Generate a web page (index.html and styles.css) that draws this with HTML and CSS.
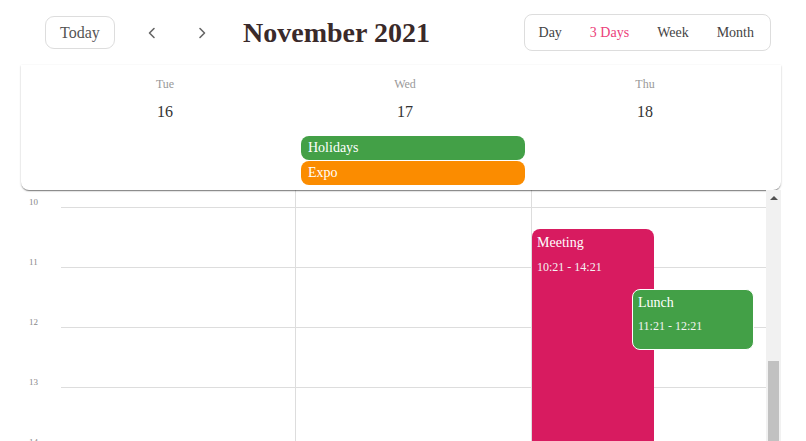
FILE: index.html
```html
<!DOCTYPE html>
<html>
<head>
<meta charset="utf-8">
<link rel="stylesheet" href="styles.css">
</head>
<body>
<div class="app">
  <header class="toolbar">
    <button class="today">Today</button>
    <button class="nav" aria-label="Previous">
      <svg width="16" height="16" viewBox="0 0 16 16"><polyline points="10,3.5 5.5,8 10,12.5" fill="none" stroke="#666" stroke-width="1.6" stroke-linecap="round" stroke-linejoin="round"/></svg>
    </button>
    <button class="nav" aria-label="Next">
      <svg width="16" height="16" viewBox="0 0 16 16"><polyline points="6,3.5 10.5,8 6,12.5" fill="none" stroke="#666" stroke-width="1.6" stroke-linecap="round" stroke-linejoin="round"/></svg>
    </button>
    <h1 class="title">November 2021</h1>
    <div class="views">
      <span class="view">Day</span>
      <span class="view active">3 Days</span>
      <span class="view">Week</span>
      <span class="view">Month</span>
    </div>
  </header>

  <section class="day-card">
    <div class="day-head">
      <div class="day"><div class="dow">Tue</div><div class="num">16</div></div>
      <div class="day"><div class="dow">Wed</div><div class="num">17</div></div>
      <div class="day"><div class="dow">Thu</div><div class="num">18</div></div>
      <div class="allday">
        <div class="bar green">Holidays</div>
        <div class="bar orange">Expo</div>
      </div>
    </div>
  </section>

  <section class="body">
    <div class="gutter">
      <div class="hour first"><span>10</span></div>
      <div class="hour"><span>11</span></div>
      <div class="hour"><span>12</span></div>
      <div class="hour"><span>13</span></div>
      <div class="hour"><span>14</span></div>
    </div>
    <div class="cols">
      <div class="col c1">
        <div class="slot first"></div><div class="slot"></div><div class="slot"></div><div class="slot"></div><div class="slot"></div>
      </div>
      <div class="col c2">
        <div class="slot first"></div><div class="slot"></div><div class="slot"></div><div class="slot"></div><div class="slot"></div>
      </div>
      <div class="col c3">
        <div class="slot first"></div><div class="slot"></div><div class="slot"></div><div class="slot"></div><div class="slot"></div>
        <div class="event meeting">
          <div class="ev-title">Meeting</div>
          <div class="ev-time">10:21 - 14:21</div>
        </div>
        <div class="event lunch">
          <div class="ev-title">Lunch</div>
          <div class="ev-time">11:21 - 12:21</div>
        </div>
      </div>
    </div>
    <div class="scrollbar">
      <div class="arrow"></div>
      <div class="thumb"></div>
    </div>
  </section>
</div>
</body>
</html>
```

FILE: styles.css
```css
* { box-sizing: border-box; }
html, body { margin: 0; padding: 0; background: #fff; }
body {
  font-family: "Liberation Serif", "Times New Roman", serif;
  width: 806px;
  height: 441px;
  overflow: hidden;
}

.toolbar {
  height: 65px;
  display: flex;
  align-items: center;
  padding-left: 45px;
}
.today {
  font-family: inherit;
  font-size: 16px;
  color: #555;
  background: #fff;
  border: 1px solid #ddd;
  border-radius: 9px;
  width: 70px;
  height: 33px;
  padding: 0;
  margin-right: 12px;
}
.nav {
  width: 50px;
  height: 33px;
  border: 0;
  background: transparent;
  padding: 0;
  display: flex;
  align-items: center;
  justify-content: center;
}
.title {
  margin: 0 0 0 16px;
  font-size: 28px;
  font-weight: bold;
  color: #3a2a2a;
  flex: 1;
  line-height: 1;
}
.views {
  display: flex;
  align-items: center;
  height: 37px;
  border: 1px solid #ddd;
  border-radius: 8px;
  margin-right: 35px;
  padding: 0 2px 0 0;
}
.view {
  padding: 0 14px;
  font-size: 14px;
  color: #444;
}
.view.active { color: #ec407a; }

.day-card {
  margin: 0 25px 0 21px;
  height: 125px;
  background: #fff;
  border-radius: 0 0 8px 8px;
  box-shadow: 0 2px 1px -1px rgba(0, 0, 0, 0.35), 0 1px 2px 0 rgba(0, 0, 0, 0.25), 0 0 1px 0 rgba(0, 0, 0, 0.08);
  position: relative;
  z-index: 2;
  padding: 11px 0 0 24px;
}
.day-head {
  display: grid;
  grid-template-columns: 240px 240px 240px;
}
.day { text-align: center; }
.dow {
  font-size: 12px;
  line-height: 16px;
  color: #999;
}
.num {
  margin-top: 12px;
  font-size: 16px;
  line-height: 16px;
  color: #333;
}
.allday {
  grid-column: 2;
  margin: 16px 0 0 16px;
  display: flex;
  flex-direction: column;
  gap: 1px;
}
.bar {
  height: 24px;
  border-radius: 8px;
  color: #fff;
  font-size: 14px;
  line-height: 24px;
  padding-left: 7px;
}
.green { background: #43a047; }
.orange { background: #fb8c00; }

.body {
  display: flex;
  height: 251px;
  overflow: hidden;
}
.gutter {
  width: 61px;
  flex: none;
}
.hour {
  height: 60px;
  display: flex;
  align-items: flex-end;
  padding-left: 29px;
}
.hour.first { height: 17px; }
.hour span {
  font-size: 9px;
  line-height: 10px;
  color: #888;
}
.cols {
  display: grid;
  grid-template-columns: 234px 236px 235px;
  flex: none;
}
.col {
  position: relative;
  display: flex;
  flex-direction: column;
}
.c2, .c3 { border-left: 1px solid #ddd; }
.slot {
  height: 60px;
  border-top: 1px solid #ddd;
  flex: none;
}
.slot.first { height: 17px; border-top: 0; }

.event {
  position: absolute;
  color: #fff;
  border-radius: 8px;
}
.meeting {
  top: 39px;
  left: 0;
  width: 122px;
  height: 240px;
  background: #d81b60;
  padding: 6px 5px;
}
.lunch {
  top: 99px;
  left: 100px;
  width: 122px;
  height: 61px;
  background: #43a047;
  border: 1px solid #fff;
  padding: 5px 5px;
}
.ev-title {
  font-size: 14px;
  line-height: 16px;
}
.ev-time {
  font-size: 12px;
  line-height: 16px;
  margin-top: 8px;
  color: #f4f4f4;
}
.lunch .ev-time { margin-top: 7px; }

.scrollbar {
  width: 15px;
  flex: none;
  background: #f1f1f1;
  position: relative;
  z-index: 3;
  display: flex;
  flex-direction: column;
  align-items: center;
}
.arrow {
  margin-top: 6px;
  width: 0;
  height: 0;
  border-left: 4px solid transparent;
  border-right: 4px solid transparent;
  border-bottom: 4px solid #505050;
}
.thumb {
  margin-top: 161px;
  width: 11px;
  flex: 1;
  background: #c1c1c1;
}
```
